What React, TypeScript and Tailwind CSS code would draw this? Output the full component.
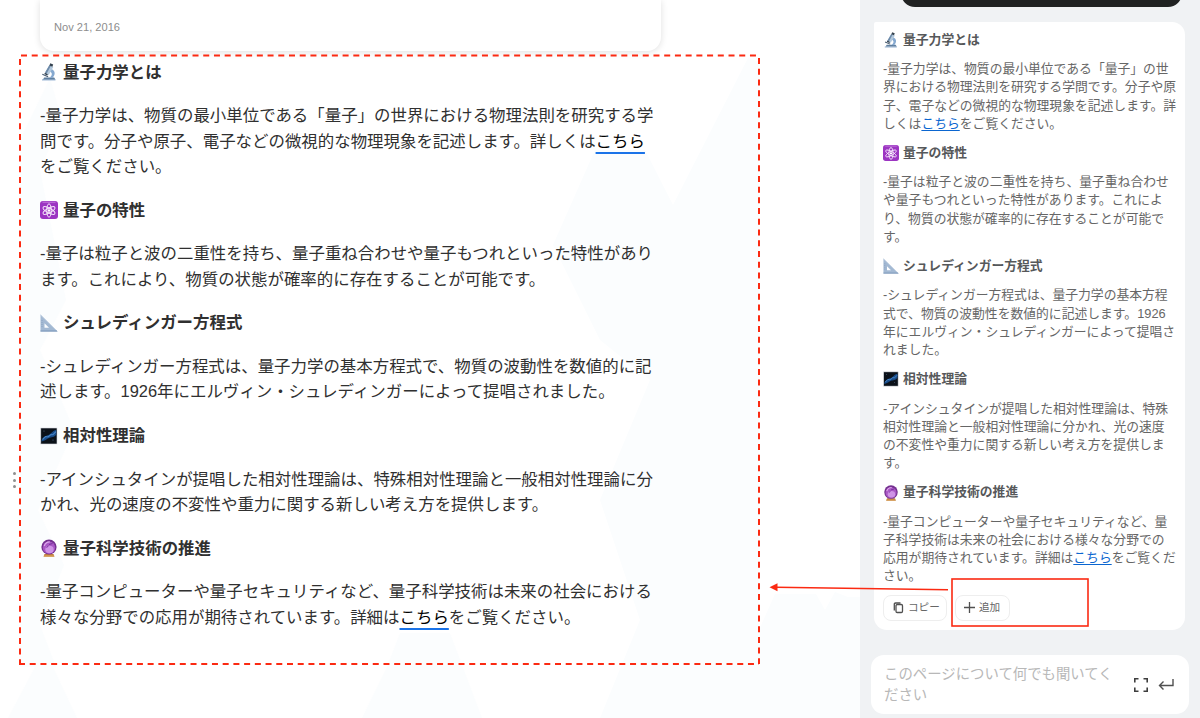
import React from 'react';

type IconName = 'microscope' | 'atom' | 'ruler' | 'galaxy' | 'crystal';

interface Section {
    icon: IconName;
    title: string;
    wide: string[];
    narrow: string[];
}

const LINK = 'こちら';

const sections: Section[] = [
    {
        icon: 'microscope',
        title: '量子力学とは',
        wide: [
            '-量子力学は、物質の最小単位である「量子」の世界における物理法則を研究する学',
            '問です。分子や原子、電子などの微視的な物理現象を記述します。詳しくはこちら',
            'をご覧ください。',
        ],
        narrow: [
            '-量子力学は、物質の最小単位である「量子」の世',
            '界における物理法則を研究する学問です。分子や原',
            '子、電子などの微視的な物理現象を記述します。詳',
            'しくはこちらをご覧ください。',
        ],
    },
    {
        icon: 'atom',
        title: '量子の特性',
        wide: [
            '-量子は粒子と波の二重性を持ち、量子重ね合わせや量子もつれといった特性があり',
            'ます。これにより、物質の状態が確率的に存在することが可能です。',
        ],
        narrow: [
            '-量子は粒子と波の二重性を持ち、量子重ね合わせ',
            'や量子もつれといった特性があります。これによ',
            'り、物質の状態が確率的に存在することが可能で',
            'す。',
        ],
    },
    {
        icon: 'ruler',
        title: 'シュレディンガー方程式',
        wide: [
            '-シュレディンガー方程式は、量子力学の基本方程式で、物質の波動性を数値的に記',
            '述します。1926年にエルヴィン・シュレディンガーによって提唱されました。',
        ],
        narrow: [
            '-シュレディンガー方程式は、量子力学の基本方程',
            '式で、物質の波動性を数値的に記述します。1926',
            '年にエルヴィン・シュレディンガーによって提唱さ',
            'れました。',
        ],
    },
    {
        icon: 'galaxy',
        title: '相対性理論',
        wide: [
            '-アインシュタインが提唱した相対性理論は、特殊相対性理論と一般相対性理論に分',
            'かれ、光の速度の不変性や重力に関する新しい考え方を提供します。',
        ],
        narrow: [
            '-アインシュタインが提唱した相対性理論は、特殊',
            '相対性理論と一般相対性理論に分かれ、光の速度',
            'の不変性や重力に関する新しい考え方を提供しま',
            'す。',
        ],
    },
    {
        icon: 'crystal',
        title: '量子科学技術の推進',
        wide: [
            '-量子コンピューターや量子セキュリティなど、量子科学技術は未来の社会における',
            '様々な分野での応用が期待されています。詳細はこちらをご覧ください。',
        ],
        narrow: [
            '-量子コンピューターや量子セキュリティなど、量',
            '子科学技術は未来の社会における様々な分野での',
            '応用が期待されています。詳細はこちらをご覧くだ',
            'さい。',
        ],
    },
];

const SectionIcon: React.FC<{ name: IconName; className: string }> = ({ name, className }) => (
    <svg viewBox="0 0 18 18" className={className}>
        {name === 'microscope' && (
            <>
                <path d="M2 16.2h13.500v1.300H2z" fill="#9fb9d6" />
                <path d="M4.200 14.400h10l1.200 2H3z" fill="#5f7f9f" />
                <path d="M11.500 6c4 1.600 4.200 6 .8 9l-2.600-.6c2.700-2 2.900-4.500.2-6z" fill="#86a9d0" />
                <path d="M9.300 2.200l4 1.800-4.600 8-3.700-2.100z" fill="#b3c8dc" />
                <path d="M9.300 2.200l1.500.7-4.100 7.700-1.700-1z" fill="#6c8aa9" />
                <path d="M10.300.3l2.900 1.200-.8 2.200-3-1.300z" fill="#34424f" />
                <path d="M2.500 10.700l5.800 2.500-.4 1-5.800-2.500z" fill="#465a6f" />
                <path d="M5 9.700l2.900 1.600-.7 1.200-2.900-1.500z" fill="#2f3e4d" />
            </>
        )}
        {name === 'atom' && (
            <>
                <rect width="18" height="18" rx="3" fill="#9c35c2" />
                <path d="M2.500 1.200h13" stroke="#d093e4" strokeWidth=".8" />
                <g fill="none" stroke="#f5e6fa" strokeWidth="1">
                    <ellipse cx="9" cy="9.500" rx="2.300" ry="6.700" />
                    <ellipse cx="9" cy="9.500" rx="2.300" ry="6.700" transform="rotate(60 9 9.500)" />
                    <ellipse cx="9" cy="9.500" rx="2.300" ry="6.700" transform="rotate(-60 9 9.500)" />
                </g>
                <circle cx="9" cy="9.500" r="1.300" fill="#fff" />
            </>
        )}
        {name === 'ruler' && (
            <>
                <path d="M.5.8L17.500 17.500H.5zM4.500 9.300v4.500h4.500z" fill="#a3b9d3" fillRule="evenodd" />
                <path d="M.5.8L17.500 17.500" stroke="#c3d1e2" />
                <path d="M.5 17h16.500" stroke="#7894b8" />
                <path d="M2 6v8" stroke="#8ba3c1" strokeDasharray="1 1" />
            </>
        )}
        {name === 'galaxy' && (
            <>
                <rect x=".8" y="1" width="16.200" height="16" fill="#0b1119" stroke="#d7dbe0" strokeWidth=".6" />
                <path d="M1.500 13.500c2-4 4-4.500 7-5.500s4-4.500 7.800-5v4.500c-2 3-5 2.600-7.300 3.500s-4 3-7.500 3.500z" fill="#184b88" />
                <path d="M2.500 12.500l3-3 2.500.5 3-2.500 2 .2 3-3" fill="none" stroke="#4583c6" strokeWidth="1.100" />
                <circle cx="4" cy="4" r=".5" fill="#60789a" />
                <circle cx="13" cy="13" r=".5" fill="#60789a" />
            </>
        )}
        {name === 'crystal' && (
            <>
                <path d="M4.500 15h9l1 2.700h-11z" fill="#bd7b3f" />
                <path d="M4 17h10" stroke="#e0ad5c" />
                <circle cx="9" cy="8" r="7.600" fill="#74308f" />
                <circle cx="9" cy="8.600" r="6.200" fill="#a957c5" />
                <ellipse cx="9.500" cy="10.500" rx="4.200" ry="3.700" fill="#cf93e6" />
                <path d="M4.300 7c.8-3 3-4.200 5.500-4.200" fill="none" stroke="#dda9ec" strokeWidth="1.300" />
                <path d="M9 5.500l3.500-1M6.500 8.500l2-1.500" stroke="#74319a" />
            </>
        )}
    </svg>
);

const Line: React.FC<{ text: string; linkClass: string }> = ({ text, linkClass }) => {
    const [before, after] = text.split(LINK);
    return (
        <span className="block whitespace-nowrap">
            {before}
            {after !== undefined && <a href="#" className={linkClass}>{LINK}</a>}
            {after}
        </span>
    );
};

const Backdrop: React.FC = () => (
    <svg className="absolute inset-0 h-full w-full" viewBox="0 0 860 718">
        <g fill="#fbfdfe">
            <path d="M50 78L20 140V667H56L40 625L64 565L38 510L74 430L40 350L66 300L40 170L62 120z" />
            <path d="M35 667L8 718H77L53 667z" />
            <path d="M748 58L673 205L645 150L595 150L553 245L600 340L650 380L600 500L640 620L600 718H860V597L848 597L835 592L825 610L816 594H775L759 630V62z" />
            <path d="M387 667L362 718H482L450 633L400 633z" />
        </g>
    </svg>
);

const Annotations: React.FC = () => (
    <svg className="pointer-events-none absolute inset-0 h-full w-full" viewBox="0 0 1200 718">
        <g stroke="#fb2a12" strokeWidth="2" fill="none">
            <path d="M21 55.500H759" strokeDasharray="6 4.720" />
            <path d="M20 59V664" strokeDasharray="6 4.720" />
            <path d="M759 58V664" strokeDasharray="6 4.720" />
            <path d="M19 664H759" strokeDasharray="6 4.720" />
            <path d="M948 589.800L776 587.300" strokeWidth="1.500" />
            <rect x="952" y="579" width="136" height="47" strokeWidth="1.600" />
        </g>
        <path d="M769.500 587.200L777.500 583.300V591.300z" fill="#fb2a12" />
    </svg>
);

const Article: React.FC = () => (
    <main className="relative w-[860px] shrink-0 bg-white">
        <Backdrop />
        <div className="relative pl-10">
            <div className="flex h-[51px] w-[621px] items-end rounded-b-[14px] bg-white px-3.5 pb-4 shadow-[0_1px_7px_rgba(0,0,0,0.13)]">
                <span className="text-[11.1px] leading-4 text-[#8d8d8d]">Nov 21, 2016</span>
            </div>
            <div className="mt-[8.8px] flex flex-col gap-[18.4px] text-[16.45px] leading-[25.3px] text-[#303030]">
                {sections.map((section) => (
                    <React.Fragment key={section.title}>
                        <h2 className="flex items-center gap-[5px] font-bold">
                            <SectionIcon name={section.icon} className="size-[18px]" />
                            {section.title}
                        </h2>
                        <p>
                            {section.wide.map((line) => (
                                <Line key={line} text={line} linkClass="text-black underline decoration-[#1a73e8] decoration-[1.5px] underline-offset-[5px]" />
                            ))}
                        </p>
                    </React.Fragment>
                ))}
            </div>
        </div>
        <div className="absolute top-[472px] left-[13px] flex flex-col gap-[3.5px]">
            <i className="size-[3px] rounded-full bg-[#8f8f8f]" />
            <i className="size-[3px] rounded-full bg-[#8f8f8f]" />
            <i className="size-[3px] rounded-full bg-[#8f8f8f]" />
        </div>
    </main>
);

const ChatPanel: React.FC = () => (
    <aside className="flex w-[340px] shrink-0 flex-col bg-[#f0f2f4]">
        <div className="ml-[41px] h-[7px] w-[281px] overflow-hidden">
            <div className="-mt-8 h-[39px] rounded-[14px] bg-[#202222]" />
        </div>
        <div className="mt-[15px] ml-3.5 h-[608px] w-[311px] rounded-[13px] rounded-tl-[2px] bg-white pt-[8.8px] pl-[9px]">
            <div className="flex flex-col gap-[11px] text-[12.8px] leading-[18.23px] text-[#666666]">
                {sections.map((section) => (
                    <React.Fragment key={section.title}>
                        <h3 className="flex items-center gap-1 font-bold text-[#56585a]">
                            <SectionIcon name={section.icon} className="size-4" />
                            {section.title}
                        </h3>
                        <p>
                            {section.narrow.map((line) => (
                                <Line key={line} text={line} linkClass="text-[#0b66d0] underline underline-offset-2" />
                            ))}
                        </p>
                    </React.Fragment>
                ))}
            </div>
            <div className="mt-[9px] flex gap-2 text-[10.6px] text-[#666666]">
                <button className="flex h-[26px] w-[64px] items-center gap-[4px] rounded-lg border border-[#eeeeee] pl-[9px]">
                    <svg viewBox="0 0 11 12" className="h-3 w-[11px] shrink-0" fill="none" stroke="#505050" strokeWidth="1.3">
                        <rect x="3" y="2.5" width="6.5" height="8" rx="1.2" />
                        <path d="M1.300 8.500V2.300Q1.300 1 2.600 1H7.500" />
                    </svg>
                    <span className="whitespace-nowrap">コピー</span>
                </button>
                <button className="flex h-[26px] w-[55px] items-center gap-1 rounded-lg border border-[#eeeeee] pl-2">
                    <svg viewBox="0 0 11 11" className="size-[11px] shrink-0" stroke="#505050" strokeWidth="1.3">
                        <path d="M5.500 0V11M0 5.500H11" />
                    </svg>
                    <span className="whitespace-nowrap">追加</span>
                </button>
            </div>
        </div>
        <div className="mt-[25px] ml-[11px] flex h-[59px] w-[318px] items-center rounded-[13px] bg-white pl-[13px]">
            <div className="w-[249px] text-[14.4px] leading-[21px] whitespace-nowrap text-[#b8b8b8]">
                このページについて何でも聞いてく<br />ださい
            </div>
            <svg viewBox="0 0 14 14" className="ml-px h-[14px] w-[14px] shrink-0" fill="none" stroke="#3e3e3e" strokeWidth="1.6">
                <path d="M.8 4.500V.8H4.500M9.500.8H13.200V4.500M13.200 9.500V13.200H9.500M4.500 13.200H.8V9.500" />
            </svg>
            <svg viewBox="0 0 16 14" className="ml-[10px] h-[14px] w-4 shrink-0" fill="none" stroke="#505050" strokeWidth="1.4">
                <path d="M15 1V7.500H1.500M5.500 3.500L1.500 7.500L5.500 11.500" />
            </svg>
        </div>
    </aside>
);

const App: React.FC = () => {
    return (
        <div className="relative flex h-[718px] w-[1200px] overflow-hidden font-['Liberation_Sans','Noto_Sans_CJK_JP',sans-serif]" lang="ja">
            <Article />
            <ChatPanel />
            <Annotations />
        </div>
    );
};

export default App;
